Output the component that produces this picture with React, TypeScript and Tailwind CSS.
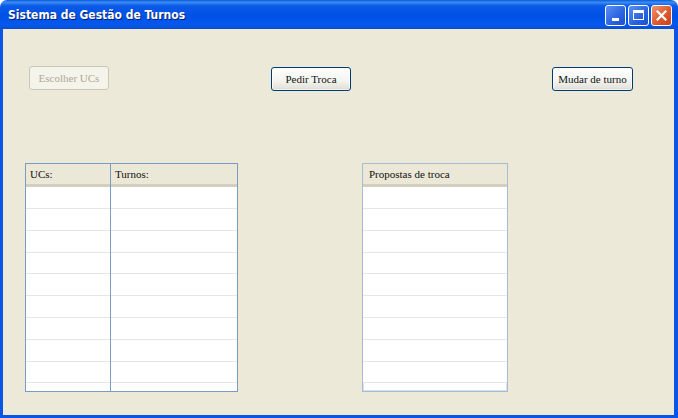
const ROWS = 9;

function XpButton({ label, disabled, w }: { label: string; disabled?: boolean; w: string }) {
  return (
    <button
      className={
        disabled
          ? `${w} h-[24px] rounded-[3px] border border-[#cac8bb] bg-[#f5f4ea] text-[#aca899] text-[11px] font-normal`
          : `${w} h-[24px] rounded-[3px] border border-[#003c74] bg-[linear-gradient(to_bottom,#ffffff,#f3f3ef_60%,#e4e3dc_90%,#d6d0c5)] text-[#111] text-[11px] font-normal shadow-[inset_0_0_0_1px_rgba(255,255,255,0.7)]`
      }
      style={{ fontFamily: '"Liberation Serif", serif' }}
    >
      {label}
    </button>
  );
}

function Header({ label, className }: { label: string; className?: string }) {
  return (
    <div
      className={`h-[23px] flex items-center px-[4px] text-[11px] text-[#111] bg-[#ebe8d7] border-b-[3px] border-[#d3cfbe] shadow-[0_1px_0_#c9c5b4] ${className ?? ""}`}
    >
      {label}
    </div>
  );
}

function Rows() {
  return (
    <div className="flex flex-col bg-white">
      {Array.from({ length: ROWS }).map((_, i) => (
        <div key={i} className="h-[21.8px] border-b border-[#e6e6e6]" />
      ))}
    </div>
  );
}

export default function App() {
  return (
    <div
      className="w-[678px] h-[418px] flex flex-col bg-white"
      style={{ fontFamily: '"Liberation Serif", serif' }}
    >
      {/* Title bar */}
      <div className="h-[29px] shrink-0 rounded-t-[7px] flex items-center pl-[8px] pr-[6px] bg-[linear-gradient(to_bottom,#0a5ad8,#3b8cf5_8%,#0a5ae6_20%,#0052e6_55%,#0558ee_85%,#0a4fd0)]">
        <span
          className="text-white text-[12px] font-bold [text-shadow:1px_1px_0_#0a1e6e]"
          style={{ fontFamily: '"DejaVu Sans Condensed", "DejaVu Sans", sans-serif' }}
        >
          Sistema de Gestão de Turnos
        </span>
        <div className="ml-auto flex gap-[2px] mt-[1px]">
          <div className="w-[21px] h-[21px] rounded-[3px] border border-white bg-[linear-gradient(135deg,#5b8ff5,#2a63df_60%,#1c4fd2)] flex items-end justify-center pb-[4px]">
            <div className="w-[7px] h-[3px] bg-white" />
          </div>
          <div className="w-[21px] h-[21px] rounded-[3px] border border-white bg-[linear-gradient(135deg,#5b8ff5,#2a63df_60%,#1c4fd2)] flex items-center justify-center">
            <div className="w-[11px] h-[10px] border border-white border-t-[3px]" />
          </div>
          <div className="w-[21px] h-[21px] rounded-[3px] border border-white bg-[linear-gradient(135deg,#f09470,#e0582f_55%,#c8401e)] flex items-center justify-center">
            <svg width="11" height="11" viewBox="0 0 11 11">
              <path d="M1.5 1.5 L9.5 9.5 M9.5 1.5 L1.5 9.5" stroke="white" strokeWidth="2.2" strokeLinecap="square" />
            </svg>
          </div>
        </div>
      </div>

      {/* Window body */}
      <div className="flex-1 flex flex-col bg-[#ece9d8] border-l-[3px] border-r-[4px] border-b-[3px] border-[#0a55e5]">
        <div className="flex mt-[37px] pl-[26px]">
          <XpButton label="Escolher UCs" disabled w="w-[80px]" />
          <div className="ml-[162px]">
            <XpButton label="Pedir Troca" w="w-[80px]" />
          </div>
          <div className="ml-[201px]">
            <XpButton label="Mudar de turno" w="w-[81px]" />
          </div>
        </div>

        <div className="flex mt-[72px] pl-[22px]">
          {/* UCs / Turnos table */}
          <div className="w-[213px] h-[229px] border border-[#7a9cc2] bg-white flex overflow-hidden">
            <div className="w-[85px] border-r border-[#7a9cc2] flex flex-col">
              <Header label="UCs:" />
              <Rows />
            </div>
            <div className="flex-1 flex flex-col">
              <Header label="Turnos:" />
              <Rows />
            </div>
          </div>

          {/* Propostas table */}
          <div className="ml-[124px] w-[146px] h-[229px] border border-[#a7bcd3] shadow-[inset_0_0_0_1px_#d4e0ec] bg-white flex flex-col overflow-hidden">
            <Header label="Propostas de troca" className="px-[6px]" />
            <Rows />
          </div>
        </div>
      </div>
    </div>
  );
}
